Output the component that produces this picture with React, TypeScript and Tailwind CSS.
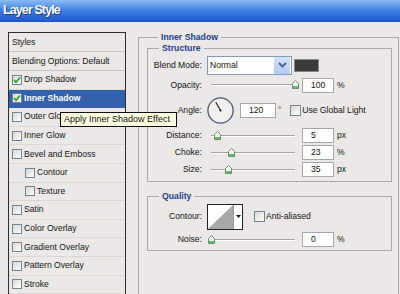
import React from "react";

const effects = [
  { label: "Drop Shadow", checked: true },
  { label: "Inner Shadow", checked: true, active: true },
  { label: "Outer Glow" },
  { label: "Inner Glow" },
  { label: "Bevel and Emboss" },
  { label: "Contour", indent: true },
  { label: "Texture", indent: true },
  { label: "Satin" },
  { label: "Color Overlay" },
  { label: "Gradient Overlay" },
  { label: "Pattern Overlay" },
  { label: "Stroke" },
];

function CheckBox({ checked, big }: { checked?: boolean; big?: boolean }) {
  return (
    <div
      className={`${big ? "w-[11px] h-[11px]" : "w-[10px] h-[10px]"} shrink-0 border border-[#6f8296] bg-linear-to-br from-[#d9d8d2] to-white flex items-center justify-center`}
    >
      {checked && (
        <svg width="8" height="8" viewBox="0 0 8 8">
          <path d="M1 4 L3 6.2 L7 1.5" fill="none" stroke="#22a022" strokeWidth="1.7" />
        </svg>
      )}
    </div>
  );
}

function Thumb() {
  return (
    <svg width="7" height="9" viewBox="0 0 7 9">
      <path d="M3.5 0.5 L6.5 3.5 V8.5 H0.5 V3.5 Z" fill="#fbfbfb" stroke="#6d8a6d" strokeWidth="1" />
      <path d="M1 6 H6 V8 H1 Z" fill="#5cbf6a" />
    </svg>
  );
}

function Slider({ pos }: { pos: number }) {
  return (
    <div className="relative w-[88px] h-[12px] ml-[2px] shrink-0">
      <div className="absolute left-[2px] right-[2px] top-[5px] h-[2px] border-t border-[#a3a19d] bg-white"></div>
      <div className="absolute top-[1px]" style={{ left: pos - 3.5 }}>
        <Thumb />
      </div>
    </div>
  );
}

function NumBox({ value, w = "w-[32px]" }: { value: string; w?: string }) {
  return (
    <div className={`${w} h-[15px] shrink-0 border border-[#a5a7ab] bg-white pl-[8px] flex items-center`}>
      {value}
    </div>
  );
}

function Label({ text }: { text: string }) {
  return <div className="w-[55px] shrink-0 text-right pr-[1px]">{text}</div>;
}

function SliderRow({ label, pos, value, unit }: { label: string; pos: number; value: string; unit: string }) {
  return (
    <div className="h-[17px] flex items-center">
      <Label text={label} />
      <div className="w-[4px]"></div>
      <Slider pos={pos} />
      <div className="w-[5px]"></div>
      <NumBox value={value} />
      <span className="ml-[3px]">{unit}</span>
    </div>
  );
}

export default function App() {
  return (
    <div
      className="w-[400px] h-[294px] overflow-hidden bg-[#ebe8e7] text-[#151515] text-[8.6px] leading-[11px] relative"
      style={{ fontFamily: "'Liberation Sans', Arial, sans-serif" }}
    >
      <div className="h-[22px] bg-linear-to-b from-[#8cbaf2] via-[#3b7de0] to-[#1f54c8] flex items-center pl-[3px] pb-[1px]">
        <span className="text-white font-bold text-[12.5px] tracking-[-0.9px] [text-shadow:1px_1px_0_#1a3c8a]">
          Layer Style
        </span>
      </div>

      <div className="flex">
        <div className="ml-[8px] mt-[10px] w-[118px] h-[280px] border border-[#2d2d2d] shrink-0">
          <div className="h-[19px] flex items-center pl-[3px] border-b border-[#c9c6c1]">Styles</div>
          <div className="h-[19px] flex items-center pl-[3px] border-b border-[#c9c6c1]">
            Blending Options: Default
          </div>
          {effects.map((e) => (
            <div
              key={e.label}
              className={`h-[18.6px] flex items-center border-b ${
                e.active ? "bg-[#3262ad] text-white font-bold border-[#3262ad]" : "border-[#dcd9d5]"
              } ${e.indent ? "pl-[16px]" : "pl-[3px]"}`}
            >
              <CheckBox checked={e.checked} />
              <span className="ml-[2px]">{e.label}</span>
            </div>
          ))}
        </div>

        <fieldset className="ml-[12px] mt-[10px] w-[261px] h-[300px] border border-[#aaa8a4] pl-[8px]">
          <legend className="ml-[11px] px-[3px] font-bold text-[#1f3f8e] text-[8.7px] leading-[11px]">
            Inner Shadow
          </legend>

          <fieldset className="w-[245px] border border-[#aaa8a4] pb-[3px]">
            <legend className="ml-[11px] px-[3px] font-bold text-[#1f3f8e] text-[8.7px] leading-[11px]">
              Structure
            </legend>

            <div className="h-[22px] flex items-center">
              <Label text="Blend Mode:" />
              <div className="w-[4px]"></div>
              <div className="w-[85px] h-[19px] border border-[#7f9db9] bg-white flex items-center shrink-0">
                <span className="pl-[2px] flex-1">Normal</span>
                <div className="w-[16px] h-[17px] mr-[1px] bg-linear-to-b from-[#d6e2fd] to-[#b4c8f4] rounded-[1px] flex items-center justify-center">
                  <svg width="9" height="6" viewBox="0 0 9 6">
                    <path d="M1 1 L4.5 4.5 L8 1" fill="none" stroke="#4d6185" strokeWidth="1.8" />
                  </svg>
                </div>
              </div>
              <div className="ml-[2px] w-[25px] h-[13px] bg-[#3c3b3b] border border-[#8a8a8a]"></div>
            </div>

            <div className="h-[18px] flex items-center">
              <Label text="Opacity:" />
              <div className="w-[4px]"></div>
              <Slider pos={86} />
              <div className="w-[5px]"></div>
              <NumBox value="100" />
              <span className="ml-[3px]">%</span>
            </div>

            <div className="h-[33px] flex items-center">
              <Label text="Angle:" />
              <div className="w-[4px]"></div>
              <svg width="27" height="27" viewBox="0 0 27 27" className="shrink-0">
                <circle cx="13.5" cy="13.5" r="12.6" fill="#f1f0ee" stroke="#4a5874" strokeWidth="1.3" />
                <line x1="13.5" y1="13.5" x2="8.8" y2="5.2" stroke="#222" strokeWidth="1.2" />
                <circle cx="13.5" cy="13.5" r="1.1" fill="#222" />
              </svg>
              <div className="w-[6px]"></div>
              <NumBox value="120" w="w-[36px]" />
              <span className="ml-[2px] self-start mt-[10px] text-[8px]">°</span>
              <div className="ml-[9px]">
                <CheckBox big />
              </div>
              <span className="ml-[1px]">Use Global Light</span>
            </div>

            <SliderRow label="Distance:" pos={8} value="5" unit="px" />
            <SliderRow label="Choke:" pos={22} value="23" unit="%" />
            <SliderRow label="Size:" pos={19} value="35" unit="px" />
          </fieldset>

          <fieldset className="mt-[9px] w-[245px] border border-[#aaa8a4] pb-[2px]">
            <legend className="ml-[11px] px-[3px] font-bold text-[#1f3f8e] text-[8.7px] leading-[11px]">
              Quality
            </legend>

            <div className="h-[29px] flex items-center">
              <Label text="Contour:" />
              <div className="w-[4px]"></div>
              <div className="w-[36px] h-[26px] border border-[#222] bg-white flex shrink-0">
                <svg width="25" height="24" viewBox="0 0 25 24" className="shrink-0">
                  <rect width="25" height="24" fill="#fff" />
                  <polygon points="0,24 25,0 25,24" fill="#a8a8a8" />
                </svg>
                <div className="flex-1 border-l border-[#9a9a9a] flex items-center justify-center">
                  <svg width="5" height="3" viewBox="0 0 5 3">
                    <path d="M0 0 H5 L2.5 3 Z" fill="#111" />
                  </svg>
                </div>
              </div>
              <div className="ml-[11px]">
                <CheckBox big />
              </div>
              <span className="ml-[1px]">Anti-aliased</span>
            </div>

            <SliderRow label="Noise:" pos={2} value="0" unit="%" />
          </fieldset>
        </fieldset>
      </div>

      <div className="absolute left-[60px] top-[112px] w-[117px] h-[15px] bg-[#ffffe1] border border-[#111] text-[9px] flex items-center pl-[3px] text-[#111]">
        Apply Inner Shadow Effect
      </div>
    </div>
  );
}
